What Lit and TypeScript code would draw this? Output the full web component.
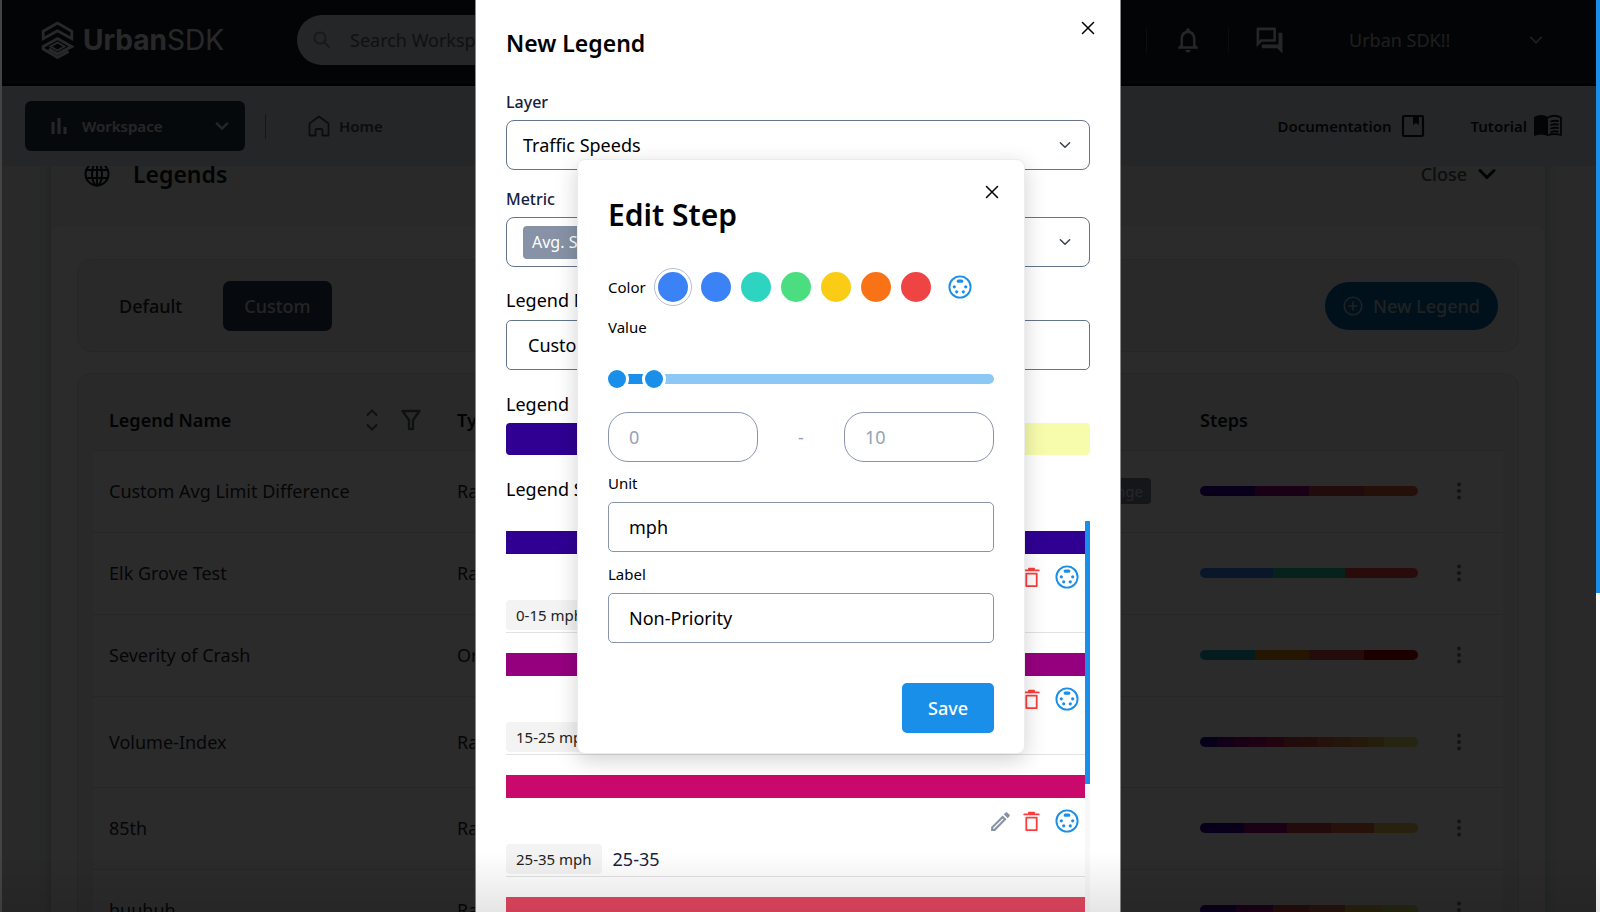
import { LitElement, html, css } from "lit";
import { customElement, property, state } from "lit/decorators.js";
import { styleMap } from "lit/directives/style-map.js";

const shared = css`
  *, *::before, *::after { box-sizing: border-box; }
  h1, h2, h3, p, ul { margin: 0; padding: 0; }
  ul { list-style: none; }
  button, input, select { font: inherit; color: inherit; margin: 0; }
  button { border: 0; background: none; padding: 0; cursor: pointer; }
  a { color: inherit; text-decoration: none; }
  svg { display: block; flex: none; }
  .line { fill: none; stroke: currentColor; stroke-linecap: round; stroke-linejoin: round; }
`;

const chevron = (size: number, width: number) => html`
  <svg width=${size} height=${size} viewBox="0 0 24 24" aria-hidden="true">
    <path class="line" stroke-width=${width} d="M5 8.500l7 7 7-7" />
  </svg>`;

const cross = html`
  <svg width="14" height="14" viewBox="0 0 14 14" aria-hidden="true">
    <path class="line" stroke-width="1.500" d="M1.500 1.500l11 11M12.500 1.500l-11 11" />
  </svg>`;

const dial = html`
  <svg width="24" height="24" viewBox="0 0 24 24" aria-hidden="true" fill="currentColor">
    <circle class="line" cx="12" cy="12" r="10.600" stroke-width="1.900" />
    <rect x="8.700" y="4.600" width="6.600" height="3.200" rx="1.500" />
    <circle cx="6.300" cy="11.800" r="1.600" /><circle cx="17.700" cy="11.800" r="1.600" />
    <circle cx="8.700" cy="16.800" r="1.600" /><circle cx="15.300" cy="16.800" r="1.600" />
  </svg>`;

interface Legend { name: string; type: string; metric?: string; tall?: boolean; colors: string[]; }

const LEGENDS: Legend[] = [
  { name: "Custom Avg Limit Difference", type: "Range", metric: "Change", colors: ["#300099", "#93007f", "#c9414d", "#dd6235"] },
  { name: "Elk Grove Test", type: "Range", colors: ["#3b82f6", "#1fc7a0", "#ef4444"] },
  { name: "Severity of Crash", type: "Ordinal", colors: ["#22a6b8", "#dd850f", "#d94848", "#a80000"] },
  { name: "Volume-Index", type: "Range", tall: true, colors: ["#300099", "#6a0090", "#93007f", "#b80070", "#c5185f", "#c93c50", "#d1503f", "#dc6a3c", "#dc8040", "#dc9440", "#dcb04a", "#d8d868", "#d8d868"] },
  { name: "85th", type: "Range", colors: ["#300099", "#93007f", "#cf4150", "#df6a40", "#e6c04c"] },
  { name: "huuhuh", type: "Range", colors: ["#300099", "#93007f", "#cf4150", "#df6a40", "#e6c04c", "#d8d868"] },
];

const STEPS = [
  { color: "#2f0092", range: "0-15 mph", label: "0-15" },
  { color: "#95007e", range: "15-25 mph", label: "15-25" },
  { color: "#c9096b", range: "25-35 mph", label: "25-35" },
  { color: "#e5475f", range: "35-45 mph", label: "35-45" },
];

@customElement("site-header")
class SiteHeader extends LitElement {
  static styles = [shared, css`
    :host { display: block; }
    .bar { display: flex; align-items: center; height: 86px; padding: 0 55px 4px 41px; background: #141d24; color: #eee; border-bottom: 2px solid #000; }
    .brand { display: flex; align-items: center; gap: 9px; width: 256px; font: 700 28px/36px Inter, sans-serif; }
    .brand .thin { font-weight: 400; }
    .search { display: flex; align-items: center; gap: 17px; width: 600px; height: 50px; padding: 0 16px; border-radius: 25px; background: #dcdfe6; color: #94979c; }
    .search input { flex: 1; border: 0; outline: 0; background: none; font-size: 18px; }
    .search input::placeholder { color: #62656a; opacity: 1; }
    .tools { display: flex; align-items: center; margin-left: auto; color: #dedede; }
    .split { width: 1px; height: 25px; background: #46505a; }
    .icon { display: grid; place-items: center; width: 81px; }
    .account { display: flex; align-items: center; justify-content: space-between; width: 196px; margin-left: 39px; font-size: 18px; color: #b4b4b4; }
    .nav { display: flex; align-items: center; height: 80px; padding: 0 38px 0 25px; background: #dce0e8; color: #111827; font-size: 15px; font-weight: 600; }
    .workspace { display: flex; align-items: center; width: 220px; height: 50px; padding: 0 14px 0 23px; border-radius: 6px; background: #263847; color: #e0e0e0; }
    .workspace .name { margin-left: 12px; margin-right: auto; }
    .nav .split { margin: 0 42px 0 20px; background: #7c828a; }
    .link { display: flex; align-items: center; gap: 9px; }
    .home { font-weight: 600; color: #444b57; }
    .links { display: flex; gap: 46px; margin-left: auto; }
    .tight { gap: 7px; }
  `];
  render() {
    return html`
      <header class="bar">
        <a class="brand" href="#" aria-label="UrbanSDK">
          <svg width="33" height="40" viewBox="0 0 33 40" aria-hidden="true">
            <g fill="none" stroke="currentColor" stroke-width="2.800">
              <path d="M2.200 11.200L16.500 3 30.800 11.200v7.500L16.500 10.800 2.200 18.700z" />
              <path d="M27.500 31.500L16.500 37.500 2.200 29V26.500L16.500 18.500 30.800 26.500 16.500 34 8 29" />
              <path d="M9.500 26.500l7-4 7 4-7 4z" stroke-width="1.800" />
            </g>
          </svg>
          <span>Urban<span class="thin">SDK</span></span>
        </a>
        <div class="search">
          <svg width="18" height="18" viewBox="0 0 18 18" aria-hidden="true">
            <circle class="line" cx="7" cy="7" r="5.600" stroke-width="2" /><path class="line" stroke-width="2" d="M11.500 11.500l4.500 4.500" />
          </svg>
          <input type="search" aria-label="Search" placeholder="Search Workspace" />
        </div>
        <div class="tools">
          <span class="split"></span>
          <button class="icon" aria-label="Notifications">
            <svg width="30" height="30" viewBox="0 0 24 24" fill="currentColor"><path d="M12 22c1.100 0 2-.9 2-2h-4c0 1.100.9 2 2 2zm6-6v-5c0-3.070-1.630-5.640-4.500-6.320V4c0-.83-.67-1.500-1.500-1.500s-1.500.67-1.500 1.500v.68C7.640 5.360 6 7.920 6 11v5l-2 2v1h16v-1l-2-2zm-2 1H8v-6c0-2.480 1.510-4.500 4-4.500s4 2.020 4 4.500v6z" /></svg>
          </button>
          <span class="split"></span>
          <button class="icon" aria-label="Messages">
            <svg width="31" height="31" viewBox="0 0 24 24" fill="currentColor"><path d="M15 4v7H5.170L4 12.170V4h11m1-2H3c-.55 0-1 .45-1 1v14l4-4h10c.55 0 1-.45 1-1V3c0-.55-.45-1-1-1zm5 4h-2v9H6v2c0 .55.45 1 1 1h11l4 4V7c0-.55-.45-1-1-1z" /></svg>
          </button>
          <button class="account"><span>Urban SDK!!</span>${chevron(18, 2.2)}</button>
        </div>
      </header>
      <nav class="nav">
        <button class="workspace">
          <svg width="22" height="22" viewBox="0 0 22 22" fill="currentColor" aria-hidden="true"><path d="M3.500 7h3v12h-3zM9.500 3h3v16h-3zM15.500 12h3v7h-3z" /></svg>
          <span class="name">Workspace</span>${chevron(18, 3)}
        </button>
        <span class="split"></span>
        <a class="link home" href="#">
          <svg width="22" height="22" viewBox="0 0 22 22" aria-hidden="true"><path class="line" stroke-width="1.800" d="M1.500 8.500L11 1.500l9.500 7v12h-6v-5a1.500 1.500 0 0 0-1.500-1.500H9a1.500 1.500 0 0 0-1.500 1.500v5h-6z" /></svg>
          Home
        </a>
        <div class="links">
          <a class="link" href="#">Documentation
            <svg width="24" height="24" viewBox="0 0 24 24" aria-hidden="true"><rect class="line" x="2" y="2" width="20" height="20" rx="1" stroke-width="2.200" /><path fill="currentColor" d="M12 2h6v9l-3-2-3 2z" /></svg>
          </a>
          <a class="link tight" href="#">Tutorial
            <svg width="28" height="24" viewBox="0 0 28 24" aria-hidden="true"><path fill="currentColor" d="M0 3q7-4 14 0v19q-7-3-14 0z" /><path class="line" stroke-width="1.800" d="M14 3.500q6-3.500 13 0V21q-7-2-13 0M17 7.500q3-1.200 7-.5M17 11q3-1.200 7-.5M17 14.500q3-1.200 7-.5M17 18q3-1.200 7-.5" /></svg>
          </a>
        </div>
      </nav>`;
  }
}

@customElement("legend-library")
class LegendLibrary extends LitElement {
  static styles = [shared, css`
    :host { display: block; flex: 1; min-height: 0; overflow: hidden; padding: 0 55px 0 51px; background: #ebf3ee; color: #1c2532; font-size: 18px; }
    .panel { margin-top: -44px; box-shadow: 0 0 12px #b4bac4; }
    .heading { display: flex; align-items: center; height: 104px; padding: 0 46px 0 33px; color: #10151f; background: #ebf3ee; }
    .heading h2 { margin-left: 23px; margin-right: auto; font-size: 23px; line-height: 32px; font-weight: 600; }
    .close { display: flex; align-items: center; gap: 8px; font-size: 18px; font-weight: 500; color: #4d525b; }
    .close svg { color: #05070a; }
    .body { padding: 33px 26px; border-radius: 12px 12px 0 0; background: #fdfdfd; }
    .toolbar { display: flex; align-items: center; height: 93px; padding: 0 20px; border: 1px solid #dde3e0; border-radius: 14px; background: #ebf1ee; font-weight: 500; }
    .tab { height: 50px; padding: 0 21px; border-radius: 7px; margin-right: 20px; }
    .tab.on { background: #263a4c; color: #d5d5d5; }
    .new { display: flex; align-items: center; gap: 10px; height: 48px; padding: 0 18px; margin-left: auto; border-radius: 24px; background: #0064a8; color: #bcc4ca; }
    .frame { margin-top: 21px; padding: 0 15px; border: 1px solid #dde3e0; border-radius: 14px; background: #ebf1ee; }
    table { width: 100%; border-collapse: collapse; table-layout: fixed; }
    th, td { padding: 0 0 0 16px; text-align: left; font-weight: 400; }
    th { height: 76px; padding-top: 16px; font-weight: 600; color: #10151f; }
    td { height: 82px; border-top: 1px solid #dedede; background: #fdfdfd; }
    .tall td { height: 91px; }
    .c-name { width: 348px; } .c-type { width: 300px; } .c-steps { width: 249px; } .c-menu { width: 70px; }
    .sortable { display: flex; align-items: center; gap: 22px; padding-right: 20px; color: #10151f; }
    .sortable span { margin-right: auto; }
    .sortable svg { color: #59606e; }
    .metric { padding-right: 33px; text-align: right; }
    .tag { display: inline-block; padding: 0 8px; border-radius: 4px; background: #78839a; color: #e2e2e2; font-size: 15px; line-height: 26px; }
    .scale { display: flex; width: 218px; height: 10px; border-radius: 5px; overflow: hidden; }
    .scale i { flex: 1; }
    .dots { display: block; color: #6a7486; }
  `];
  render() {
    return html`
      <section class="panel">
        <div class="heading">
          <svg width="26" height="26" viewBox="0 0 26 26" aria-hidden="true"><g class="line" stroke-width="2"><circle cx="13" cy="13" r="11.500" /><ellipse cx="13" cy="13" rx="5" ry="11.500" /><path d="M13 1.500v23M2 9h22M2 17h22" /></g></svg>
          <h2>Legends</h2>
          <button class="close">Close ${chevron(24, 3)}</button>
        </div>
        <div class="body">
          <div class="toolbar">
            <button class="tab">Default</button>
            <button class="tab on">Custom</button>
            <button class="new">
              <svg width="20" height="20" viewBox="0 0 20 20" aria-hidden="true"><circle class="line" cx="10" cy="10" r="8.800" stroke-width="1.600" /><path class="line" stroke-width="1.600" d="M10 6v8M6 10h8" /></svg>
              New Legend
            </button>
          </div>
          <div class="frame">
            <table>
              <colgroup><col class="c-name" /><col class="c-type" /><col /><col class="c-steps" /><col class="c-menu" /></colgroup>
              <thead><tr>
                <th><div class="sortable"><span>Legend Name</span>
                  <svg width="14" height="24" viewBox="0 0 14 24" aria-hidden="true"><path class="line" stroke-width="2" d="M2.500 7L7 2.500 11.500 7M2.500 17L7 21.500l4.500-4.500" /></svg>
                  <svg width="20" height="22" viewBox="0 0 20 22" aria-hidden="true"><path class="line" stroke-width="2.400" d="M1.500 2h17l-6.500 9v9H8v-9z" /></svg>
                </div></th>
                <th>Type</th><th></th><th>Steps</th><th></th>
              </tr></thead>
              <tbody>${LEGENDS.map((l) => html`
                <tr class=${l.tall ? "tall" : ""}>
                  <td>${l.name}</td><td>${l.type}</td>
                  <td class="metric">${l.metric ? html`<span class="tag">${l.metric}</span>` : ""}</td>
                  <td><div class="scale">${l.colors.map((c) => html`<i style=${styleMap({ background: c })}></i>`)}</div></td>
                  <td><button class="dots" aria-label="Options">
                    <svg width="22" height="20" viewBox="0 0 22 20" fill="currentColor"><circle cx="10" cy="3.500" r="2" /><circle cx="10" cy="10" r="2" /><circle cx="10" cy="16.500" r="2" /></svg>
                  </button></td>
                </tr>`)}
              </tbody>
            </table>
          </div>
        </div>
      </section>`;
  }
}

@customElement("legend-drawer")
class LegendDrawer extends LitElement {
  static styles = [shared, css`
    :host { display: flex; flex-direction: column; overflow: hidden; padding: 0 30px; background: #fff; color: #000; border: solid #8a8a8a; border-width: 0 1px; font-size: 18px; }
    .top { display: flex; align-items: flex-start; justify-content: space-between; height: 91px; padding-top: 21px; margin-right: -5px; }
    .top h1 { padding-top: 7px; font-size: 23px; line-height: 30px; font-weight: 600; }
    .caption { display: block; height: 29px; font-size: 16px; line-height: 23px; font-weight: 500; color: #14213d; }
    .plain { display: block; line-height: 24px; }
    .box { display: flex; align-items: center; width: 100%; height: 50px; padding: 0 16px; border: 1px solid #64748b; border-radius: 8px; background: #fff; }
    .pick { display: grid; grid-template-columns: 1fr; align-items: center; margin-bottom: 18px; }
    .pick.last { margin-bottom: 21px; }
    .pick > * { grid-area: 1 / 1; }
    .pick svg { justify-self: end; margin-right: 17px; pointer-events: none; color: #39414e; }
    .pick select { appearance: none; outline: 0; }
    .tag { padding: 0 9px; border-radius: 4px; background: #8792a6; color: #fff; font-size: 16px; line-height: 33px; }
    .name { margin: 8px 0 22px; padding: 0 21px; border-radius: 5px; }
    .ramp { display: flex; height: 32px; margin: 7px 0 22px; border-radius: 4px; overflow: hidden; }
    .ramp i { flex: 1; }
    .scroll { display: grid; grid-template-columns: 1fr 5px; flex: 1; min-height: 0; margin-top: 20px; }
    .rail { background: #f8f8f9; }
    .grip { height: 263px; background: #1a8fe9; }
    .steps { padding-top: 10px; overflow: hidden; }
    .step { height: 102px; margin-bottom: 20px; border-bottom: 1px solid #e2e2e4; }
    .swatch { height: 23px; }
    .actions { display: flex; justify-content: flex-end; align-items: center; gap: 6px; height: 46px; padding-right: 6px; }
    .actions button:last-child { margin-left: 5px; color: #1a8fe9; }
    .edit { color: #8792a6; } .drop { color: #fb3c3c; }
    .text { display: flex; align-items: center; gap: 11px; height: 30px; color: #14213d; }
    .range { padding: 0 10px; border-radius: 4px; background: #f3f3f4; color: #222; font-size: 15px; line-height: 30px; }
  `];
  render() {
    return html`
      <div class="top"><h1>New Legend</h1><button aria-label="Close drawer">${cross}</button></div>
      <label class="caption" for="layer">Layer</label>
      <div class="pick"><select class="box" id="layer"><option>Traffic Speeds</option></select>${chevron(16, 2.2)}</div>
      <label class="caption" for="metric">Metric</label>
      <div class="pick last"><button class="box" id="metric"><span class="tag">Avg. Speed</span></button>${chevron(16, 2.2)}</div>
      <label class="plain" for="legend-name">Legend Name</label>
      <input class="box name" id="legend-name" .value=${"Custom Legend"} />
      <p class="plain">Legend</p>
      <div class="ramp">${["#2f0092", "#95007e", "#c9096b", "#e5475f", "#f68f46", "#f7fcad"].map((c) => html`<i style=${styleMap({ background: c })}></i>`)}</div>
      <p class="plain">Legend Steps</p>
      <div class="scroll">
        <ul class="steps">${STEPS.map((s) => html`
          <li class="step">
            <div class="swatch" style=${styleMap({ background: s.color })}></div>
            <div class="actions">
              <button class="edit" aria-label="Edit step"><svg width="25" height="25" viewBox="0 0 24 24" fill="currentColor"><path d="M14.060 9.020l.92.92L5.920 19H5v-.92l9.060-9.060M17.660 3c-.25 0-.51.1-.7.29l-1.830 1.830 3.750 3.750 1.830-1.830c.39-.39.39-1.020 0-1.410l-2.340-2.340c-.2-.2-.45-.29-.71-.29zm-3.600 3.190L3 17.250V21h3.750L17.810 9.940l-3.750-3.750z" /></svg></button>
              <button class="drop" aria-label="Delete step"><svg width="25" height="25" viewBox="0 0 24 24"><path class="line" stroke-width="1.700" d="M5 5.200h14M9.500 3.500h5M7 8.200h10v12H7z" /></svg></button>
              <button aria-label="Step color">${dial}</button>
            </div>
            <div class="text"><span class="range">${s.range}</span><span>${s.label}</span></div>
          </li>`)}
        </ul>
        <div class="rail"><div class="grip"></div></div>
      </div>`;
  }
}

@customElement("step-editor")
class StepEditor extends LitElement {
  @property({ type: Number }) low = 0;
  @property({ type: Number }) high = 10;
  @state() private chosen = 0;
  private colors = ["#3b82f6", "#3b82f6", "#2dd4bf", "#4ade80", "#facc15", "#f97316", "#ef4444"];
  static styles = [shared, css`
    :host { display: block; padding: 24px 30px 20px; border: 1px solid #ececee; border-radius: 8px; background: #fff; color: #000; font-size: 18px; box-shadow: 0 6px 22px rgba(0, 0, 0, .18); }
    .close { display: grid; width: 14px; height: 14px; margin: 1px -5px 0 auto; }
    h2 { font-size: 30px; line-height: 32px; font-weight: 600; margin-bottom: 38px; }
    .small { display: block; font-size: 15px; line-height: 20px; }
    .colors { display: flex; align-items: center; gap: 10px; height: 37px; }
    .swatch { width: 30px; height: 30px; border-radius: 50%; }
    .swatch.on { margin: 0 3px 0 2px; outline: 1px solid #b3bfce; outline-offset: 3px; }
    .custom { margin-left: 7px; color: #1a8fe9; }
    .value { margin-top: 11px; }
    .slider { display: grid; align-items: center; height: 24px; margin: 30px 0 21px; }
    .slider > * { grid-area: 1 / 1; }
    .track { height: 10px; border-radius: 5px; background: #8bc8f5; overflow: hidden; }
    .fill { height: 10px; background: #1a8fe9; }
    input[type="range"] { appearance: none; width: 100%; height: 24px; background: none; pointer-events: none; }
    input[type="range"]::-webkit-slider-thumb { appearance: none; width: 18px; height: 18px; border-radius: 50%; background: #1a8fe9; box-shadow: 0 0 0 3px #fff; pointer-events: auto; }
    .ends { display: flex; align-items: center; justify-content: space-between; margin-bottom: 11px; color: #94a3b8; }
    .field { display: block; width: 100%; height: 50px; padding: 0 20px; border: 1px solid #8794ab; border-radius: 5px; background: #fff; outline: 0; }
    .ends .field { width: 150px; border-radius: 20px; }
    .unit { margin: 9px 0 12px; }
    .label { margin: 9px 0 40px; }
    .save { display: block; width: 92px; height: 50px; margin-left: auto; border-radius: 5px; background: #1a8fe9; color: #fff; font-weight: 500; }
  `];
  render() {
    return html`
      <button class="close" aria-label="Close editor">${cross}</button>
      <h2>Edit Step</h2>
      <div class="colors"><span class="small">Color</span>
        ${this.colors.map((c, i) => html`<button class="swatch ${i === this.chosen ? "on" : ""}" aria-label="Color ${i + 1}" style=${styleMap({ background: c })} @click=${() => (this.chosen = i)}></button>`)}
        <button class="custom" aria-label="Custom color">${dial}</button>
      </div>
      <span class="small value">Value</span>
      <div class="slider">
        <div class="track"><div class="fill" style=${styleMap({ width: `${this.high + 2}%` })}></div></div>
        <input type="range" aria-label="Lowest value" min="0" max="100" .value=${String(this.low)} @input=${(e: Event) => (this.low = Number((e.target as HTMLInputElement).value))} />
        <input type="range" aria-label="Highest value" min="0" max="100" .value=${String(this.high)} @input=${(e: Event) => (this.high = Number((e.target as HTMLInputElement).value))} />
      </div>
      <div class="ends">
        <input class="field" aria-label="From" .value=${String(this.low)} /><span>-</span>
        <input class="field" aria-label="To" .value=${String(this.high)} />
      </div>
      <label class="small" for="unit">Unit</label>
      <input class="field unit" id="unit" .value=${"mph"} />
      <label class="small" for="label">Label</label>
      <input class="field label" id="label" .value=${"Non-Priority"} />
      <button class="save">Save</button>`;
  }
}

@customElement("app-root")
class AppRoot extends LitElement {
  static styles = [shared, css`
    :host { display: block; position: relative; height: 100vh; overflow: hidden; font-family: "Noto Sans", sans-serif; background: #fff; }
    .page { display: flex; flex-direction: column; height: 100%; }
    .scrim { position: absolute; inset: 0 4px 0 0; background: rgba(0, 0, 0, .83); border-left: 2px solid #444; }
    .layer { position: absolute; inset: 0; display: flex; justify-content: center; }
    .drawer { padding-right: 4px; }
    legend-drawer { width: 646px; height: 100%; }
    .float { align-items: center; padding-left: 2px; }
    step-editor { width: 448px; }
    .scrollbar { position: absolute; inset: 0 0 0 auto; width: 4px; background: #fff; }
    .thumb { height: 65%; background: #1a8fe9; }
    .fade { position: absolute; inset: auto 0 0 0; height: 60px; background: linear-gradient(transparent, rgba(0, 0, 0, .1)); pointer-events: none; }
  `];
  render() {
    return html`
      <div class="page"><site-header></site-header><legend-library></legend-library></div>
      <div class="scrim"></div>
      <div class="layer drawer"><legend-drawer role="dialog" aria-label="New Legend"></legend-drawer></div>
      <div class="layer float"><step-editor role="dialog" aria-label="Edit Step"></step-editor></div>
      <div class="scrollbar"><div class="thumb"></div></div>
      <div class="fade"></div>`;
  }
}
